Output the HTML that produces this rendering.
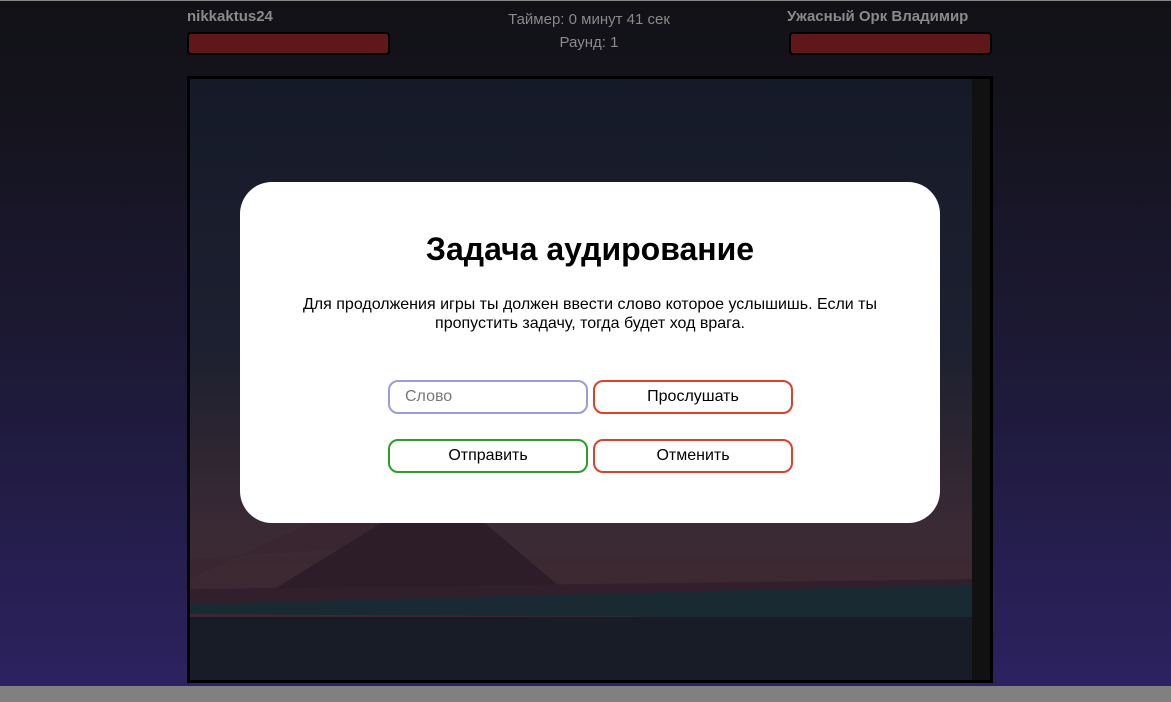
<!DOCTYPE html>
<html><head><meta charset="utf-8"><style>
*{margin:0;padding:0;box-sizing:border-box}
body{width:1171px;height:702px;overflow:hidden;font-family:"Liberation Sans",sans-serif;background:linear-gradient(#111116 0px,#15141e 120px,#1e1a3a 400px,#2c2260 686px);position:relative}
.topline{position:absolute;left:0;top:0;width:1171px;height:1px;background:#888}
.name{position:absolute;top:8px;font-weight:bold;font-size:15px;color:#8a8a8a}
.bar{position:absolute;top:32px;width:203px;height:23px;background:#5f1719;border:2px solid #000;border-radius:4px}
.mid{position:absolute;left:489px;width:200px;text-align:center;color:#8a8a8a;font-size:15px}
.frame{position:absolute;left:187px;top:76px;width:806px;height:607px;border:3px solid #000;overflow:hidden;background:#15182a}
.gray{position:absolute;left:0;top:686px;width:1171px;height:16px;background:#808080}
.modal{position:absolute;left:240px;top:182px;width:700px;height:341px;background:#fff;border-radius:32px;text-align:center}
h1{font-size:32px;font-weight:bold;margin-top:49px;color:#000}
p{font-size:16px;margin:27px auto 0;width:620px;line-height:19px;color:#000}
.btn{position:absolute;width:200px;height:34px;border:2px solid;border-radius:10px;font-size:16px;line-height:30px;text-align:center;color:#000;background:#fff}
</style></head><body>
<div class="topline"></div>
<div class="name" style="left:187px">nikkaktus24</div>
<div class="bar" style="left:187px"></div>
<div class="mid" style="top:11px">Таймер: 0 минут 41 сек</div>
<div class="mid" style="top:34px">Раунд: 1</div>
<div class="name" style="left:787px">Ужасный Орк Владимир</div>
<div class="bar" style="left:789px"></div>
<div class="frame">
<svg width="800" height="601" viewBox="0 0 800 601">
<defs><linearGradient id="sky" x1="0" y1="0" x2="0" y2="1">
<stop offset="0" stop-color="#151a28"/><stop offset="0.45" stop-color="#1d2030"/><stop offset="0.75" stop-color="#3a2a34"/><stop offset="0.88" stop-color="#3d2830"/></linearGradient></defs>
<rect width="800" height="601" fill="url(#sky)"/>
<polygon points="0,500 150,430 260,440 300,460 0,480" fill="#3a2630"/>
<polygon points="60,525 190,445 230,420 290,440 390,525" fill="#2c1d28"/>
<polygon points="0,510 800,500 800,530 0,530" fill="#321f2c"/>
<polygon points="0,525 800,505 800,540 0,535" fill="#1a2a33"/>
<rect y="538" width="800" height="63" fill="#171c26"/>
<rect x="782" width="18" height="601" fill="#111"/>
</svg>
</div>
<div class="gray"></div>
<div class="modal">
<h1>Задача аудирование</h1>
<p>Для продолжения игры ты должен ввести слово которое услышишь. Если ты пропустить задачу, тогда будет ход врага.</p>
<div class="btn" style="left:148px;top:198px;border-color:#9a9ae0;text-align:left;padding-left:15px;color:#777">Слово</div>
<div class="btn" style="left:353px;top:198px;border-color:#e0402a">Прослушать</div>
<div class="btn" style="left:148px;top:257px;border-color:#2aa02a">Отправить</div>
<div class="btn" style="left:353px;top:257px;border-color:#e0402a">Отменить</div>
</div>
</body></html>
